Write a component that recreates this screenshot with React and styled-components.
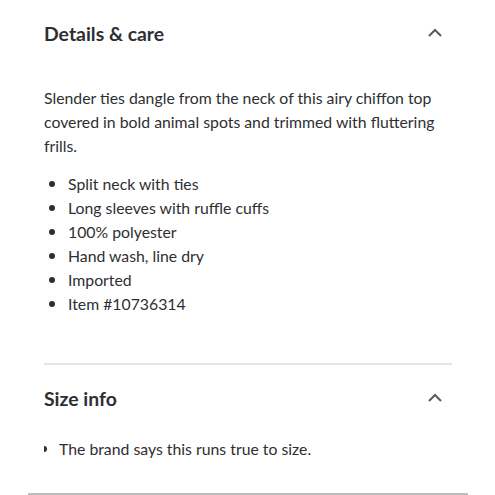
import React from 'react'
import styled, { createGlobalStyle } from 'styled-components'

const GlobalStyle = createGlobalStyle`
  body {
    margin: 0;
    background: #fff;
    font-family: Lato, "Noto Sans", sans-serif;
    color: #2e2f32;
  }
`

function Chevron() {
  return (
    <svg width="16" height="10" viewBox="0 0 16 10">
      <polyline points="2,8 8,2 14,8" fill="none" stroke="#5a5b5e" strokeWidth="2" />
    </svg>
  )
}

function App() {
  return (
    <Page>
      <GlobalStyle />
      <Section>
        <Header>
          <Title>Details &amp; care</Title>
          <Toggle><Chevron /></Toggle>
        </Header>
        <Body>
          <Description>
            Slender ties dangle from the neck of this airy chiffon top covered in bold animal spots and trimmed with fluttering frills.
          </Description>
          <List>
            <Item>Split neck with ties</Item>
            <Item>Long sleeves with ruffle cuffs</Item>
            <Item>100% polyester</Item>
            <Item>Hand wash, line dry</Item>
            <Item>Imported</Item>
            <Item>Item #10736314</Item>
          </List>
        </Body>
      </Section>
      <Divider />
      <Section>
        <Header>
          <Title>Size info</Title>
          <Toggle><Chevron /></Toggle>
        </Header>
        <SizeBody>
          <SizeLine>
            <Mark />
            The brand says this runs true to size.
          </SizeLine>
        </SizeBody>
      </Section>
      <BottomRule />
    </Page>
  )
}

export default App

const Page = styled.div`
  width: 495px;
  height: 495px;
  overflow: hidden;
  display: flex;
  flex-direction: column;
`

const Section = styled.section`
  padding: 0 43px 0 44px;
  flex-shrink: 0;
`

const Header = styled.div`
  display: flex;
  align-items: center;
  justify-content: space-between;
  height: 66px;
`

const Title = styled.h2`
  margin: 0;
  font-size: 19.4px;
  font-weight: 700;
  color: #2e2f32;
`

const Toggle = styled.span`
  display: flex;
  margin-right: 9px;
`

const Body = styled.div`
  padding-top: 20px;
  padding-bottom: 47px;
`

const Description = styled.p`
  margin: 0 0 14px;
  font-size: 15.8px;
  line-height: 24px;
`

const List = styled.ul`
  margin: 0;
  padding: 0 0 0 5px;
  list-style: none;
  font-size: 15.8px;
  line-height: 24px;
`

const Item = styled.li`
  display: flex;
  align-items: center;
  gap: 13px;
  &::before {
    content: "";
    width: 6px;
    height: 6px;
    border-radius: 50%;
    background: #2e2f32;
    flex-shrink: 0;
  }
`

const Divider = styled.hr`
  margin: 0 43px 0 44px;
  border: 0;
  height: 2px;
  background: #e3e4e5;
  flex-shrink: 0;
`

const SizeBody = styled.div`
  padding: 6px 0 32px;
`

const SizeLine = styled.div`
  display: flex;
  align-items: center;
  gap: 12px;
  font-size: 15.8px;
  line-height: 24px;
`

const Mark = styled.span`
  width: 3px;
  height: 6px;
  background: #2e2f32;
  border-radius: 0 3px 3px 0;
`

const BottomRule = styled.div`
  margin: 0 27px 0 28px;
  height: 2px;
  background: #bdbdbd;
  flex-shrink: 0;
`
